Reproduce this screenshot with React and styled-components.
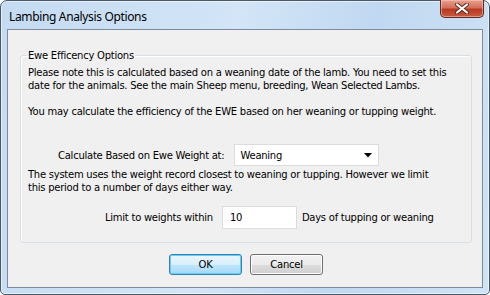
import styled, { createGlobalStyle } from "styled-components";

const GlobalStyle = createGlobalStyle`
    html, body {
        margin: 0;
        padding: 0;
        background: #ffffff;
    }
`;

function CloseIcon() {
    return (
        <svg width="16" height="11" viewBox="0 0 16 11">
            <path d="M3 1.5 L13 9.5 M13 1.5 L3 9.5" stroke="#5a2a20" strokeWidth="4" strokeLinecap="round" />
            <path d="M3 1.5 L13 9.5 M13 1.5 L3 9.5" stroke="#ffffff" strokeWidth="2.2" strokeLinecap="round" />
        </svg>
    );
}

function Combo({ value }) {
    return (
        <ComboBox>
            <span>{value}</span>
            <svg width="8" height="5" viewBox="0 0 8 5">
                <path d="M0 0 L8 0 L4 4.5 Z" fill="#000000" />
            </svg>
        </ComboBox>
    );
}

export default function App() {
    return (
        <>
            <GlobalStyle />
            <Window>
                <TitleBar>
                    <Title>Lambing Analysis Options</Title>
                    <CloseButton>
                        <CloseIcon />
                    </CloseButton>
                </TitleBar>
                <Client>
                    <Group>
                        <Legend>Ewe Efficency Options</Legend>
                        <Para>
                            Please note this is calculated based on a weaning date of the lamb. You need to set this
                            <br />
                            date for the animals. See the main Sheep menu, breeding, Wean Selected Lambs.
                        </Para>
                        <Para $top={13}>
                            You may calculate the efficiency of the EWE based on her weaning or tupping weight.
                        </Para>
                        <FieldRow $indent={30} $gap={10} $top={26}>
                            <Label>Calculate Based on Ewe Weight at:</Label>
                            <Combo value="Weaning" />
                        </FieldRow>
                        <Para $top={2}>
                            The system uses the weight record closest to weaning or tupping. However we limit
                            <br />
                            this period to a number of days either way.
                        </Para>
                        <FieldRow $indent={77} $gap={9} $top={12}>
                            <Label>Limit to weights within</Label>
                            <TextBox>10</TextBox>
                            <Label $pull={4}>Days of tupping or weaning</Label>
                        </FieldRow>
                    </Group>
                    <ButtonRow>
                        <Button $primary>OK</Button>
                        <Button>Cancel</Button>
                    </ButtonRow>
                </Client>
            </Window>
        </>
    );
}

const Window = styled.div`
    width: 490px;
    height: 295px;
    box-sizing: border-box;
    border: 1px solid #4b5866;
    border-radius: 7px 7px 5px 5px;
    box-shadow: inset 0 0 0 1px rgba(255, 255, 255, 0.55);
    background: linear-gradient(100deg, #c4dbf2 0%, #d3e5f7 45%, #c0d8f1 70%, #d0e3f6 100%);
    padding: 0 6px 6px 6px;

    display: flex;
    flex-direction: column;
`;

const TitleBar = styled.div`
    height: 28px;
    display: flex;
    justify-content: space-between;
    align-items: flex-start;
`;

const Title = styled.div`
    margin-top: 7px;
    padding-left: 2px;
    font-family: "Noto Sans", "Open Sans", sans-serif;
    font-size: 12px;
    letter-spacing: -0.35px;
    color: #000000;
`;

const CloseButton = styled.div`
    width: 44px;
    height: 18px;
    margin-top: -1px;
    margin-right: -1px;
    box-sizing: border-box;
    border: 1px solid #5e2b24;
    border-top: none;
    border-radius: 0 0 5px 5px;
    background: linear-gradient(to bottom, #e8a08e 0%, #d4705a 45%, #b83a22 55%, #c85a40 100%);
    box-shadow: inset 0 0 0 1px rgba(255, 210, 200, 0.5);

    display: flex;
    justify-content: center;
    align-items: center;
`;

const Client = styled.div`
    flex: 1;
    box-sizing: border-box;
    background: #f0f0f0;
    border: 1px solid #7d8a99;
    padding: 0 10px 0 12px;

    display: flex;
    flex-direction: column;
    font-family: "DejaVu Sans", sans-serif;
    font-size: 10px;
    letter-spacing: -0.25px;
    color: #000000;
`;

const Group = styled.fieldset`
    margin: 19px 0 0 0;
    padding: 4px 7px 13px 7px;
    border: 1px solid #d5dfe5;
    border-radius: 3px;
    box-shadow: inset 1px 1px 0 #ffffff;
    min-width: 0;
`;

const Legend = styled.legend`
    padding: 0 1px;
    margin-left: -1px;
    line-height: 13px;
`;

const Para = styled.div`
    margin-top: ${p => p.$top || 0}px;
    line-height: 13px;
    white-space: nowrap;
`;

const FieldRow = styled.div`
    margin-top: ${p => p.$top || 0}px;
    padding-left: ${p => p.$indent}px;
    display: flex;
    align-items: center;
    gap: ${p => p.$gap}px;
`;

const Label = styled.span`
    margin-left: ${p => (p.$pull ? -p.$pull : 0)}px;
    line-height: 13px;
    white-space: nowrap;
`;

const ComboBox = styled.div`
    width: 145px;
    height: 22px;
    box-sizing: border-box;
    border: 1px solid #dcdcdc;
    background: #ffffff;
    padding: 0 6px 0 5px;

    display: flex;
    align-items: center;
    justify-content: space-between;
`;

const TextBox = styled.div`
    width: 75px;
    height: 23px;
    box-sizing: border-box;
    border: 1px solid #dcdcdc;
    background: #ffffff;
    padding-left: 7px;

    display: flex;
    align-items: center;
`;

const ButtonRow = styled.div`
    margin-top: 11px;
    display: flex;
    justify-content: center;
    gap: 8px;
`;

const Button = styled.div`
    width: 73px;
    height: 21px;
    box-sizing: border-box;
    border: 1px solid ${p => (p.$primary ? "#3c7fb1" : "#707070")};
    border-radius: 3px;
    background: ${p =>
        p.$primary
            ? "linear-gradient(to bottom, #eaf6fd 0%, #d9f0fc 50%, #bee6fd 51%, #a7d9f5 100%)"
            : "linear-gradient(to bottom, #f2f2f2 0%, #ebebeb 50%, #dddddd 51%, #cfcfcf 100%)"};
    box-shadow: inset 0 0 0 1px ${p => (p.$primary ? "#5fd0f9" : "#fcfcfc")};

    display: flex;
    justify-content: center;
    align-items: center;
`;
